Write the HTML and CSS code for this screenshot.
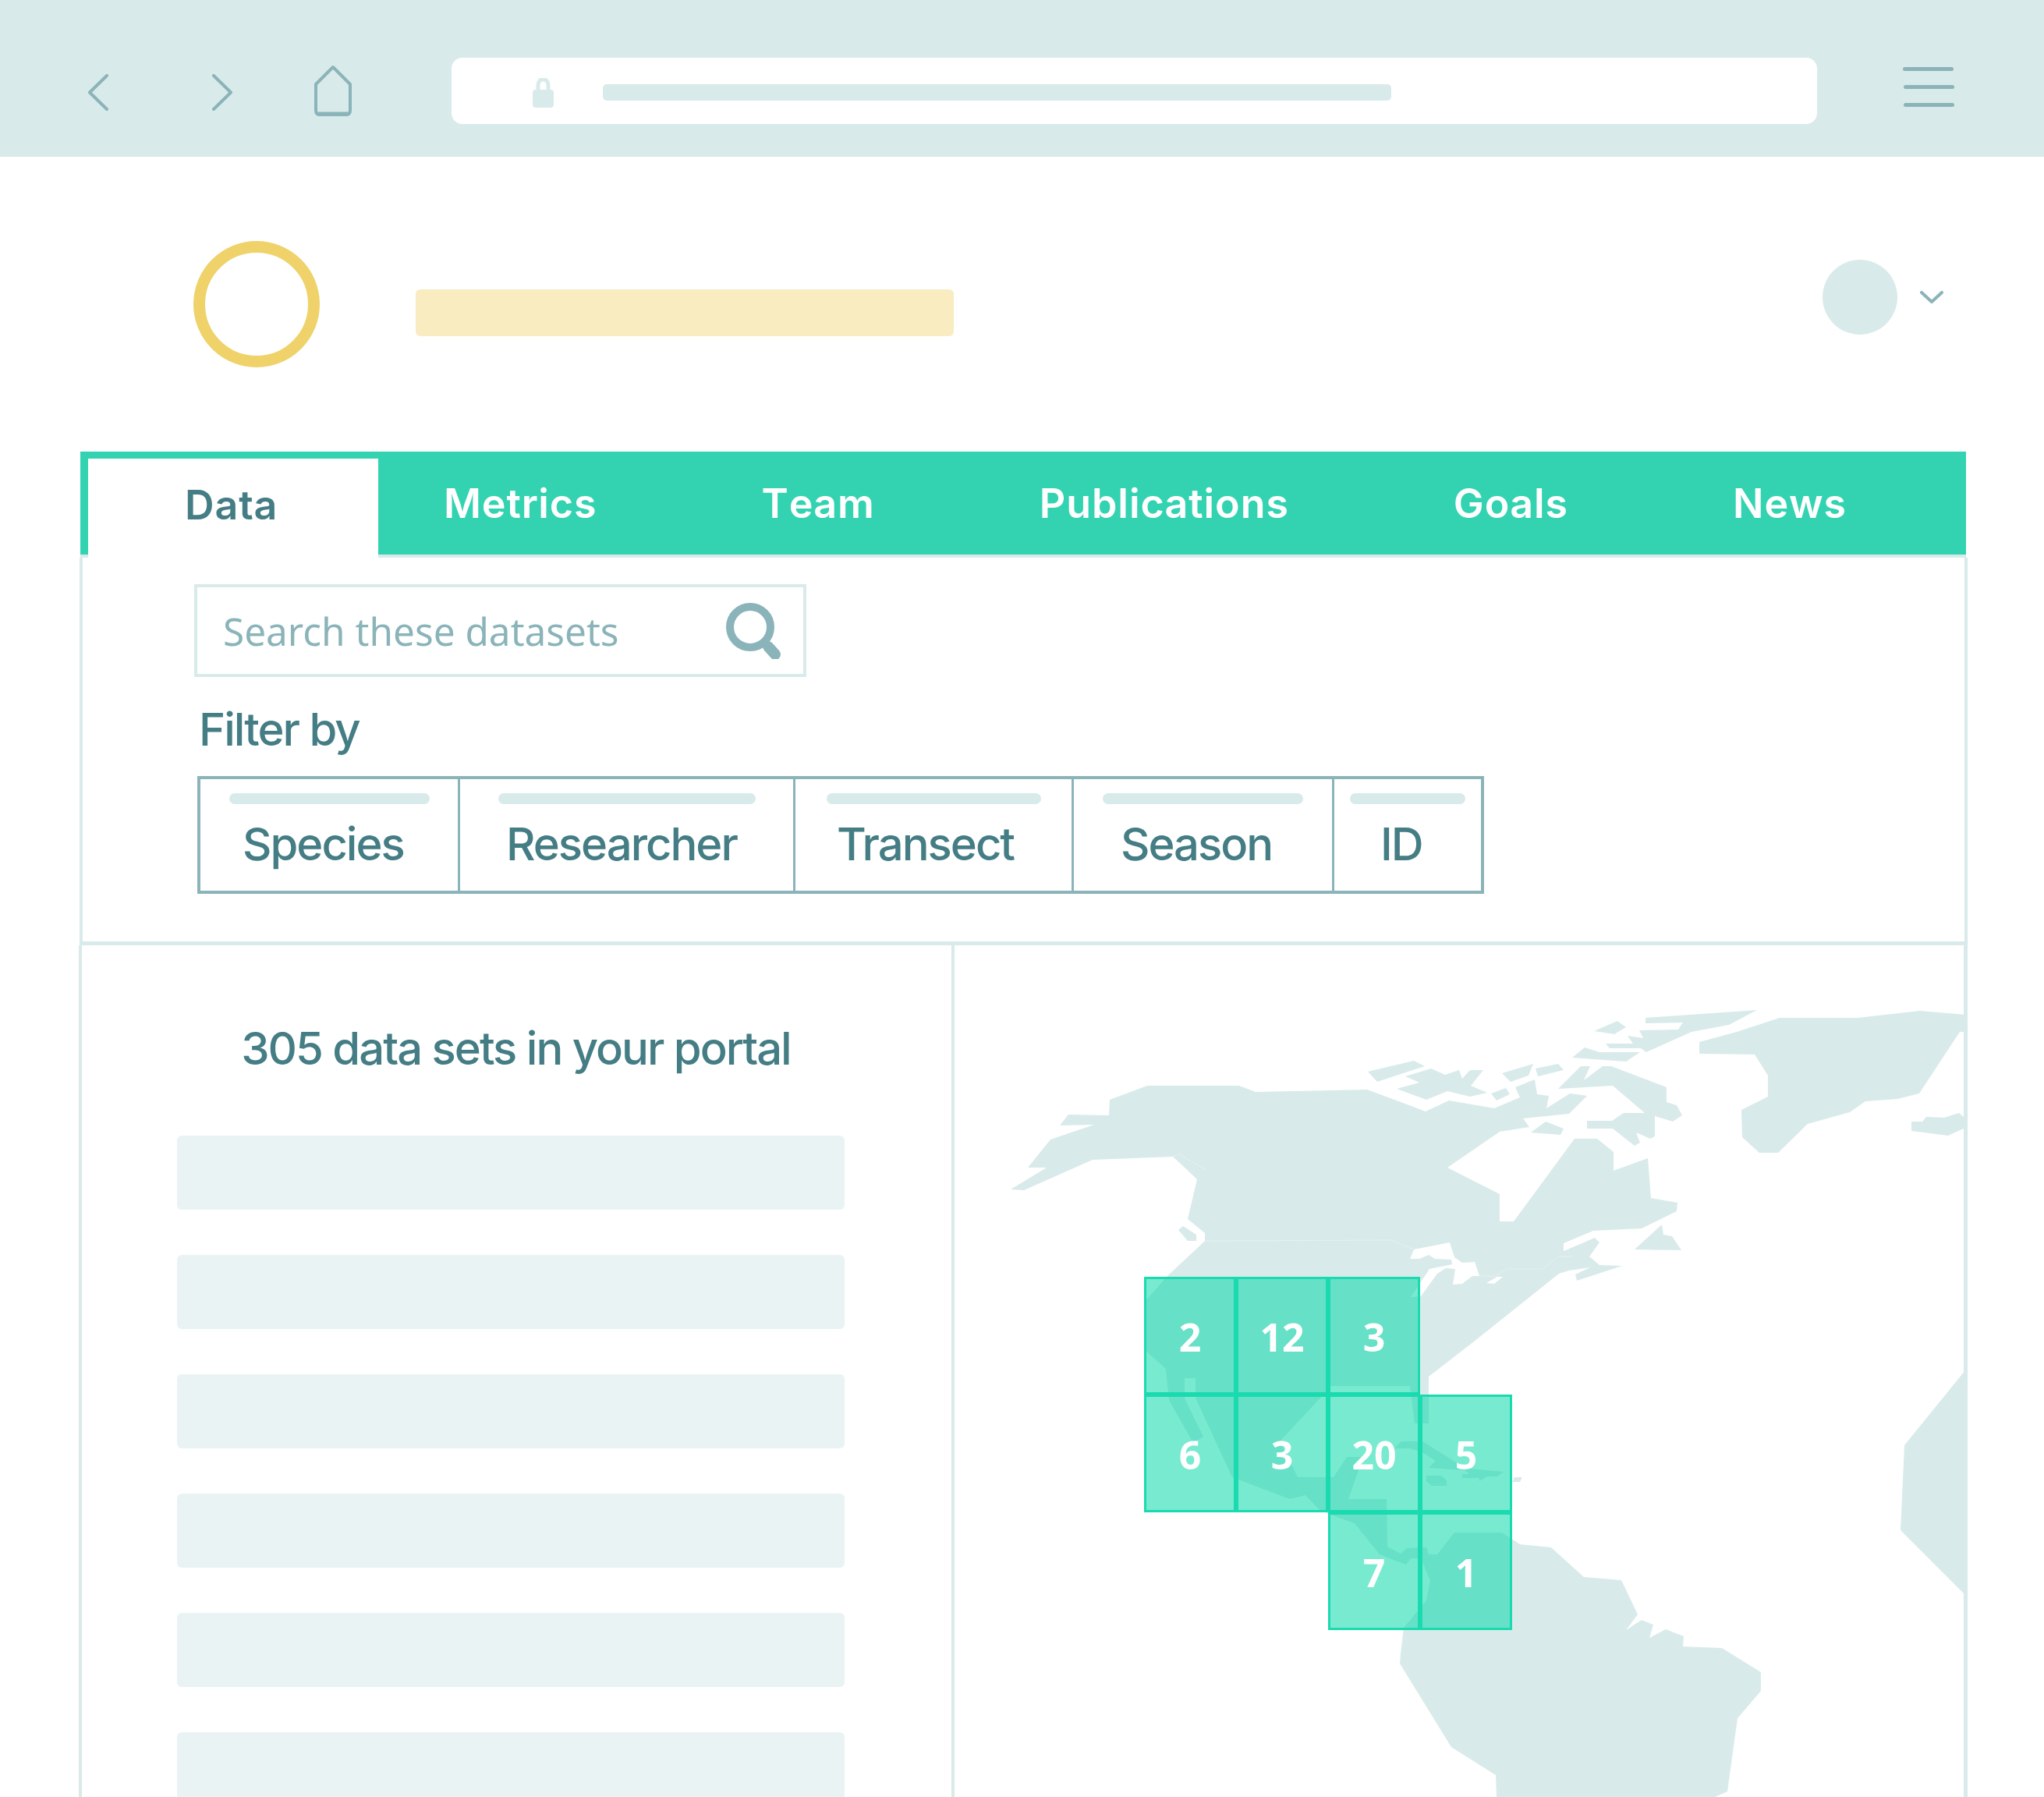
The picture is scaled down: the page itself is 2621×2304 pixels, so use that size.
FILE: index.html
```html
<!DOCTYPE html>
<html lang="en">
<head>
    <meta charset="UTF-8">
    <meta name="viewport" content="width=device-width, initial-scale=1.0">
    <title>Data portal</title>
    <link rel="stylesheet" href="styles.css">
</head>
<body>
    <!-- browser chrome -->
    <header class="toolbar">
        <svg class="icon-back" width="26" height="47" viewBox="0 0 26 47"><path d="M24 2 L2 23.5 L24 45"/></svg>
        <svg class="icon-forward" width="26" height="47" viewBox="0 0 26 47"><path d="M2 2 L24 23.5 L2 45"/></svg>
        <svg class="icon-home" width="50" height="67" viewBox="0 0 50 67"><path d="M25 3 L3 25 V58 Q3 64 8 64 H42 Q47 64 47 58 V25 Z"/><path class="home-floor" d="M6 63 H44"/></svg>
        <div class="url-bar">
            <svg class="icon-lock" width="27" height="38" viewBox="0 0 27 38"><path d="M7 17 V10 Q7 2 13.5 2 Q20 2 20 10 V17" fill="none" stroke="#d9eaea" stroke-width="5"/><rect y="15" width="27" height="23" rx="4" fill="#d9eaea"/></svg>
            <div class="url-line"></div>
        </div>
        <div class="hamburger">
            <span class="hamburger-line first"></span>
            <span class="hamburger-line"></span>
            <span class="hamburger-line"></span>
        </div>
    </header>

    <!-- site header -->
    <div class="site-head">
        <div class="logo-ring"></div>
        <div class="site-title"></div>
        <div class="avatar"></div>
        <svg class="icon-caret" width="30" height="16" viewBox="0 0 30 16"><path d="M2 2 L15 14 L28 2"/></svg>
    </div>

    <main class="portal">
        <nav class="tabs">
            <a href="#" class="tab active">Data</a>
            <a href="#" class="tab">Metrics</a>
            <a href="#" class="tab">Team</a>
            <a href="#" class="tab">Publications</a>
            <a href="#" class="tab">Goals</a>
            <a href="#" class="tab">News</a>
        </nav>

        <section class="filters">
            <div class="search-box">
                <span class="search-text">Search these datasets</span>
                <svg class="icon-search" width="72" height="72" viewBox="0 0 72 72"><circle cx="31" cy="31" r="26"/><path d="M54 56 L63 66"/></svg>
            </div>
            <p class="filter-label">Filter by</p>
            <div class="filter-table">
                <div class="filter filter-species"><span class="filter-bar"></span><span class="filter-name">Species</span></div>
                <div class="filter filter-researcher"><span class="filter-bar"></span><span class="filter-name">Researcher</span></div>
                <div class="filter filter-transect"><span class="filter-bar"></span><span class="filter-name">Transect</span></div>
                <div class="filter filter-season"><span class="filter-bar"></span><span class="filter-name">Season</span></div>
                <div class="filter filter-id"><span class="filter-bar"></span><span class="filter-name">ID</span></div>
            </div>
        </section>

        <section class="split">
            <div class="list-pane">
                <h2 class="list-title">305 data sets in your portal</h2>
                <div class="list">
                    <div class="list-row"></div>
                    <div class="list-row"></div>
                    <div class="list-row"></div>
                    <div class="list-row"></div>
                    <div class="list-row"></div>
                    <div class="list-row"></div>
                </div>
            </div>

            <div class="map-pane">
                <!-- viewBox uses page coordinates so the outline is easy to check against the picture -->
                <svg class="map" width="1294" height="1092" viewBox="1224 1212 1294 1092">
                    <g class="land">
                        <polygon points="1296,1525 1342,1497 1318,1497 1347,1461 1403,1442 1359,1443 1370,1429 1422,1430 1423,1410 1471,1392 1589,1392 1610,1400 1753,1397 1828,1425 1858,1411 1916,1421 1949,1407 1943,1394 1968,1384 1971,1403 1986,1405 1983,1421 2013,1402 2035,1405 2012,1428 1953,1434 1961,1445 1923,1451 1856,1497 1923,1531 1923,1566 1941,1566 2019,1460 2048,1460 2069,1477 2069,1501 2113,1485 2117,1536 2151,1542 2150,1553 2105,1575 2043,1578 2005,1594 2005,1604 2045,1587 2051,1593 2038,1611 2051,1622 2080,1623 2022,1642 2020,1634 2039,1625 2012,1629 1999,1633 1890,1720 1832,1765 1832,1825 1814,1825 1808,1777 1706,1777 1700,1785 1641,1848 1664,1894 1710,1894 1727,1868 1748,1868 1729,1922 1778,1922 1779,1983 1796,1992 1804,1985 1829,1984 1832,1993 1843,1993 1865,1965 1926,1965 1949,1980 1989,1984 2031,2022 2079,2026 2100,2070 2085,2090 2105,2077 2120,2083 2115,2100 2136,2089 2159,2098 2158,2111 2208,2113 2258,2144 2258,2168 2228,2203 2215,2297 2199,2304 1919,2304 1918,2276 1861,2240 1795,2133 1796,2120 1800,2087 1829,2052 1834,2027 1824,2002 1817,1998 1809,1998 1803,2006 1769,1993 1737,1953 1706,1942 1691,1935 1674,1917 1654,1922 1580,1894 1533,1792 1533,1767 1519,1767 1519,1793 1543,1842 1530,1850 1499,1795 1495,1755 1467,1730 1467,1670 1498,1635 1545,1591 1545,1581 1523,1563 1535,1512 1504,1483 1401,1487 1313,1526"/>
                        <polygon points="1517,1572 1534,1583 1534,1591 1523,1591 1511,1577"/>
                        <polygon points="2096,1602 2131,1570 2133,1583 2144,1585 2156,1603"/>
                        <polygon points="1754,1374 1813,1360 1827,1367 1766,1387"/>
                        <polygon points="1802,1380 1835,1370 1853,1378 1871,1372 1875,1383 1885,1372 1902,1372 1886,1392 1907,1401 1885,1406 1856,1399 1829,1410 1791,1396 1820,1388"/>
                        <polygon points="1912,1402 1931,1395 1936,1403 1919,1411"/>
                        <polygon points="1926,1376 1966,1364 1960,1379 1937,1387"/>
                        <polygon points="1969,1370 1998,1364 2005,1372 1972,1380"/>
                        <polygon points="1998,1396 2027,1367 2039,1367 2031,1385 2055,1367 2066,1367 2137,1394 2137,1413 2150,1417 2157,1430 2145,1438 2122,1431 2122,1457 2116,1460 2098,1452 2103,1465 2096,1469 2068,1447 2035,1447 2035,1437 2067,1437 2082,1427 2109,1427 2068,1392"/>
                        <polygon points="1963,1452 1982,1438 2005,1447 2001,1455"/>
                        <polygon points="2044,1322 2074,1309 2085,1317 2070,1326"/>
                        <polygon points="2016,1356 2032,1343 2051,1349 2103,1349 2085,1361"/>
                        <polygon points="2110,1305 2253,1295 2217,1314 2169,1323 2111,1349 2104,1344 2064,1344 2059,1338 2094,1338 2087,1328 2107,1331 2102,1321 2152,1320 2158,1311 2110,1312"/>
                        <polygon points="2179,1336 2227,1323 2282,1305 2382,1305 2462,1296 2520,1301 2520,1323 2513,1323 2461,1402 2433,1409 2392,1412 2372,1426 2318,1441 2280,1478 2256,1478 2234,1458 2233,1423 2267,1406 2267,1379 2250,1352 2179,1351"/>
                        <polygon points="2451,1438 2465,1438 2470,1432 2493,1433 2512,1427 2520,1434 2520,1446 2498,1456 2451,1450"/>
                        <polygon points="1788,1857 1797,1848 1824,1848 1867,1875 1884,1883 1928,1887 1920,1893 1907,1893 1897,1899 1897,1895 1875,1895 1875,1890 1884,1890 1878,1885 1832,1882 1841,1873 1824,1862 1808,1857"/>
                        <polygon points="1829,1892 1848,1892 1855,1898 1855,1905 1836,1905 1829,1899"/>
                        <polygon points="1942,1894 1952,1894 1949,1900 1939,1900"/>
                        <polygon points="2520,1757 2442,1853 2437,1962 2520,2045"/>
                    </g>
                    <g class="lakes">
                        <polygon points="1813,1602 1859,1593 1865,1612 1875,1619 1891,1618 1897,1636 1888,1636 1875,1646 1863,1647 1866,1627 1854,1626 1843,1633 1822,1662 1809,1663 1833,1627 1862,1621 1861,1615 1840,1614 1832,1609 1820,1614 1808,1614"/>
                        <polygon points="1906,1645 1920,1637 1927,1637 1916,1646"/>
                    </g>
                    <g class="borders">
                        <polyline points="1545,1591 1783,1590 1813,1602"/>
                        <polyline points="1897,1636 1918,1636 1932,1627 1978,1627 1998,1611 2015,1611"/>
                        <polyline points="1504,1483 1512,1480 1547,1500"/>
                    </g>
                </svg>

                <div class="grid-overlay">
                    <div class="cell">2</div>
                    <div class="cell">12</div>
                    <div class="cell">3</div>
                    <div class="cell-empty"></div>
                    <div class="cell">6</div>
                    <div class="cell">3</div>
                    <div class="cell">20</div>
                    <div class="cell">5</div>
                    <div class="cell-empty"></div>
                    <div class="cell-empty"></div>
                    <div class="cell">7</div>
                    <div class="cell">1</div>
                </div>
            </div>
        </section>
    </main>
</body>
</html>
```

FILE: styles.css
```css
html, body {
    margin: 0;
    padding: 0;
}

body {
    width: 2621px;
    height: 2304px;
    overflow: hidden;
    background: #fff;
    font-family: Inter, "Liberation Sans", sans-serif;
    color: #457d85;
}

/* browser chrome */
.toolbar {
    display: flex;
    align-items: center;
    box-sizing: border-box;
    height: 201px;
    padding: 32px 0 0 113px;
    background: #d9eaea;
}

.toolbar svg path {
    fill: none;
    stroke: #8ab4b9;
    stroke-width: 4;
    stroke-linecap: round;
    stroke-linejoin: round;
}

.icon-back {
    margin-top: 3px;
}

.icon-forward {
    margin: 3px 0 0 133px;
}

.icon-home {
    margin-left: 104px;
}

.toolbar svg .home-floor {
    stroke-width: 5;
}

.url-bar {
    display: flex;
    align-items: center;
    box-sizing: border-box;
    width: 1751px;
    height: 85px;
    margin-left: 127px;
    padding-left: 104px;
    background: #fff;
    border-radius: 14px;
}

.icon-lock {
    margin-top: 5px;
}

.toolbar .icon-lock path {
    stroke: #d9eaea;
    stroke-width: 5;
}

.url-line {
    width: 1011px;
    height: 21px;
    margin: 4px 0 0 63px;
    background: #d9eaea;
    border-radius: 5px;
}

.hamburger {
    display: flex;
    flex-direction: column;
    gap: 18px;
    margin: -10px 0 0 111px;
}

.hamburger-line {
    width: 65px;
    height: 5px;
    background: #8ab4b9;
    border-radius: 3px;
}

.hamburger-line.first {
    margin-left: -1px;
}

/* site header */
.site-head {
    display: flex;
    align-items: center;
    box-sizing: border-box;
    height: 378px;
    padding: 0 129px 0 248px;
}

.logo-ring {
    box-sizing: border-box;
    width: 162px;
    height: 162px;
    border: 15px solid #efd26a;
    border-radius: 50%;
}

.site-title {
    width: 690px;
    height: 60px;
    margin: 22px 0 0 123px;
    background: #f8ecc0;
    border-radius: 6px;
}

.avatar {
    width: 96px;
    height: 96px;
    margin: -19px 0 0 auto;
    background: #d9eaea;
    border-radius: 50%;
}

.icon-caret {
    margin: -18px 0 0 29px;
}

.icon-caret path {
    fill: none;
    stroke: #8ab4b9;
    stroke-width: 4;
    stroke-linecap: round;
    stroke-linejoin: round;
}

/* portal */
.portal {
    width: 2418px;
    margin-left: 103px;
}

.tabs {
    display: flex;
    box-sizing: border-box;
    height: 136px;
    padding-left: 10px;
    background: #33d3b2;
    border-bottom: 4px solid #d9eaea;
}

.tab {
    display: flex;
    align-items: center;
    padding: 0 105.5px;
    color: #fff;
    font-size: 52px;
    font-weight: 600;
    font-kerning: none;
    letter-spacing: 0.9px;
    text-decoration: none;
}

.tab.active {
    box-sizing: border-box;
    width: 372px;
    height: 127px;
    margin: 9px -21.5px 0 0;
    padding: 0 0 9px 124px;
    background: #fff;
    color: #457d85;
}

.filters {
    box-sizing: border-box;
    width: 2421px;
    height: 497px;
    margin-left: -1px;
    padding: 34px 0 0 143px;
    border: 4px solid #d9eaea;
    border-width: 0 4px 5px;
}

.search-box {
    display: flex;
    align-items: center;
    justify-content: space-between;
    box-sizing: border-box;
    width: 785px;
    height: 119px;
    padding: 0 27px 0 33px;
    border: 4px solid #d9eaea;
}

.search-text {
    color: #8ab4b9;
    font-family: "Noto Sans", sans-serif;
    font-size: 49.5px;
}

.icon-search circle,
.icon-search path {
    fill: none;
    stroke: #8ab4b9;
    stroke-width: 10;
}

.icon-search path {
    stroke-width: 14;
    stroke-linecap: round;
}

.filter-label {
    margin: 37px 0 0 6px;
    font-size: 58px;
    font-weight: 450;
    letter-spacing: -2px;
    line-height: 60px;
}

.filter-table {
    display: flex;
    box-sizing: border-box;
    width: 1650px;
    height: 151px;
    margin: 30px 0 0 4px;
    border: 4px solid #8ab4b9;
}

.filter {
    display: flex;
    flex-direction: column;
    box-sizing: border-box;
    padding-top: 18px;
    border-left: 3px solid #8ab4b9;
}

.filter:first-child {
    border-left: 0;
}

.filter-bar {
    display: block;
    height: 14px;
    background: #d9eaea;
    border-radius: 7px;
}

.filter-name {
    margin-top: 17px;
    font-size: 58px;
    font-weight: 450;
    letter-spacing: -2px;
    line-height: 68px;
}

.filter-species {
    width: 330px;
}

.filter-species .filter-bar {
    width: 257px;
    margin-left: 37px;
}

.filter-species .filter-name {
    margin-left: 54px;
}

.filter-researcher {
    width: 430px;
}

.filter-researcher .filter-bar {
    width: 330px;
    margin-left: 49px;
}

.filter-researcher .filter-name {
    margin-left: 59px;
}

.filter-transect {
    width: 357px;
}

.filter-transect .filter-bar {
    width: 275px;
    margin-left: 40px;
}

.filter-transect .filter-name {
    margin-left: 53px;
}

.filter-season {
    width: 334px;
}

.filter-season .filter-bar {
    width: 257px;
    margin-left: 37px;
}

.filter-season .filter-name {
    margin-left: 60px;
}

.filter-id {
    width: 191px;
}

.filter-id .filter-bar {
    width: 148px;
    margin-left: 20px;
}

.filter-id .filter-name {
    margin-left: 59px;
}

/* lower half */
.split {
    display: flex;
    box-sizing: border-box;
    width: 2422px;
    height: 1092px;
    margin-left: -2px;
    border: 4px solid #d9eaea;
    border-width: 0 5px 0 4px;
}

.list-pane {
    box-sizing: border-box;
    width: 1119px;
    padding-top: 102px;
    border-right: 4px solid #d9eaea;
}

.list-title {
    margin: 0;
    padding-right: 2px;
    font-size: 58px;
    font-weight: 450;
    letter-spacing: -2px;
    line-height: 60px;
    text-align: center;
}

.list {
    display: flex;
    flex-direction: column;
    gap: 58px;
    margin: 82px 0 0 122px;
}

.list-row {
    flex: none;
    width: 856px;
    height: 95px;
    background: #eaf3f4;
    border-radius: 6px;
}

.map-pane {
    position: relative;
    flex: 1;
    overflow: hidden;
}

.map {
    display: block;
}

.land polygon {
    fill: #d9eaea;
}

.lakes polygon {
    fill: #fff;
}

.borders polyline {
    fill: none;
    stroke: #e6f1f1;
    stroke-width: 1;
}

.grid-overlay {
    position: absolute;
    left: 243px;
    top: 425px;
    display: grid;
    grid-template-columns: repeat(4, 118px);
    grid-auto-rows: 151px;
}

.cell {
    display: flex;
    align-items: center;
    justify-content: center;
    box-sizing: border-box;
    padding-top: 3px;
    border: 3px solid #1adbb0;
    background: rgba(0, 215, 166, 0.53);
    background-clip: padding-box;
    color: #fff;
    font-family: "Open Sans", sans-serif;
    font-size: 50px;
    font-weight: 700;
}
```
